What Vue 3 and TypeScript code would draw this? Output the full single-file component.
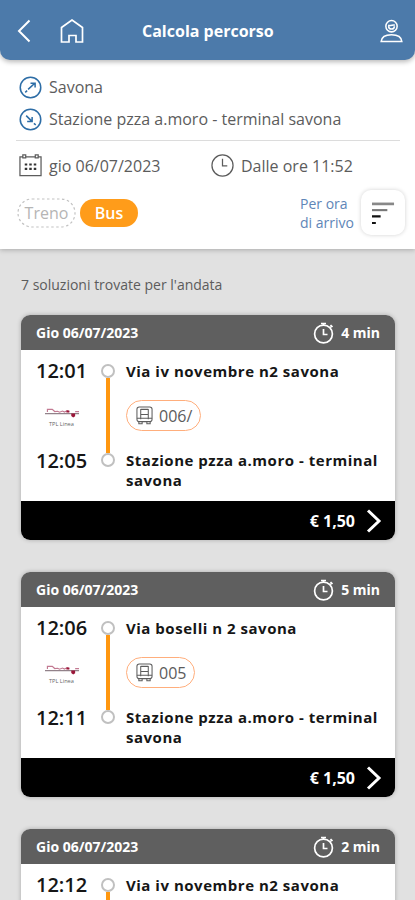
<script setup lang="ts">
interface Trip {
  duration: string
  departure: string
  arrival: string
  from: string
  line: string
}

const trips: Trip[] = [
  { duration: '4 min', departure: '12:01', arrival: '12:05', from: 'Via iv novembre n2 savona', line: '006/' },
  { duration: '5 min', departure: '12:06', arrival: '12:11', from: 'Via boselli n 2 savona', line: '005' },
  { duration: '2 min', departure: '12:12', arrival: '', from: 'Via iv novembre n2 savona', line: '' },
]
</script>

<template>
  <div class="screen">
    <header class="topbar">
      <svg class="back" viewBox="0 0 14 24"><path d="M12.500 1.500 2 12l10.500 10.500" /></svg>
      <svg class="home" viewBox="0 0 24 24"><path d="M1.500 8.500 12 1l10.500 7.500V23H16v-6.500H9V23H1.500z" /></svg>
      <h1>Calcola percorso</h1>
      <svg class="user" viewBox="0 0 24 24">
        <circle cx="12" cy="7" r="5.900" /><path d="M9 7c0 4 6 4 6 0M8.500 6c3 1 5-1 7 0M1.200 23c.5-5 4.500-7 10.800-7s10.300 2 10.800 7z" />
      </svg>
    </header>

    <section class="search">
      <div class="place">
        <svg viewBox="0 0 24 24"><circle cx="12" cy="12" r="10.700" /><path d="m6.500 17 2-1.700M9.500 14l7-6.500M12 7.500h4.800v4.500" /></svg>
        <span>Savona</span>
      </div>
      <div class="place">
        <svg viewBox="0 0 24 24"><circle cx="12" cy="12" r="10.700" /><path d="m7.500 8 6 6M13.700 9.500V14H8.500M15.500 16l2 1.500" /></svg>
        <span>Stazione pzza a.moro - terminal savona</span>
      </div>
      <div class="when">
        <div class="date">
          <svg viewBox="0 0 24 24">
            <path d="M4 3H1v19.500h22V3h-3M7 3h10M4 1h3v3H4zM17 1h3v3h-3z" />
            <path class="dots" d="M6 11h12M6 15.500h12" />
          </svg>
          <span>gio 06/07/2023</span>
        </div>
        <div class="hour">
          <svg viewBox="0 0 24 24"><circle cx="12" cy="12" r="11" /><path d="M12 5v7.500h5" /></svg>
          <span>Dalle ore 11:52</span>
        </div>
      </div>
      <div class="filters">
        <button class="chip train">
          <svg viewBox="0 0 59 30"><rect x="1" y="1" width="57" height="28" rx="14" /></svg>
          <span>Treno</span>
        </button>
        <button class="chip bus">Bus</button>
        <div class="sort-label">Per ora<br />di arrivo</div>
        <button class="sort">
          <svg viewBox="0 0 24 24">
            <path class="light" d="M0 2.500h23" /><path class="mid" d="M0 9h16" /><path d="M0 15.500h9M0 22.500h4" />
          </svg>
        </button>
      </div>
    </section>

    <main class="results">
      <p class="count">7 soluzioni trovate per l'andata</p>
      <article v-for="trip in trips" :key="trip.departure" class="card">
        <div class="card-head">
          <span class="day">Gio 06/07/2023</span>
          <svg viewBox="0 0 22 22">
            <circle cx="10.500" cy="12" r="8.900" /><path d="M8 1.500h5M10.500 1v2M10.500 7v5.500h4M17.500 3l2 2M18.500 4l-1.500 1.500" />
          </svg>
          <span class="duration">{{ trip.duration }}</span>
        </div>
        <div class="card-body">
          <div class="times">
            <span class="time">{{ trip.departure }}</span>
            <div v-if="trip.arrival" class="operator">
              <svg viewBox="0 0 36 10">
                <path class="grey" d="M0 5h35v1.300H0z" />
                <path class="red" d="M2.500 4V1.300h5L10 3.500l3-.3 2 1 3-1.200 2 1 3-1.500 2 1.500M31 3.500h4" />
                <path class="dark" d="M22 2.500h3v2h-3zM27 5.500h4v2.800l-2 1.200-2-1.500z" />
              </svg>
              <small>TPL Linea</small>
            </div>
            <span v-if="trip.arrival" class="time">{{ trip.arrival }}</span>
          </div>
          <div class="track"><i class="stop"></i><i class="rail"></i><i class="stop"></i></div>
          <div class="stops">
            <span class="stop-name">{{ trip.from }}</span>
            <template v-if="trip.arrival">
              <div class="line">
                <svg viewBox="0 0 18 20">
                  <rect x="1" y="1" width="16" height="15.500" rx="2.500" />
                  <path d="M5 3v11M13 3v11M5 3.500h8M5 9h8M1 13h16M3 16.500v2.300h3.500v-2.300M11.500 16.500v2.300H15v-2.300" />
                </svg>
                <span>{{ trip.line }}</span>
              </div>
              <span class="stop-name">Stazione pzza a.moro - terminal savona</span>
            </template>
          </div>
        </div>
        <div v-if="trip.arrival" class="card-foot">
          <span>€ 1,50</span>
          <svg viewBox="0 0 16 24"><path d="m2 1.500 11 10.500L2 22.500" /></svg>
        </div>
      </article>
    </main>
  </div>
</template>

<style>
body {
  background: #e1e1e1;
}
</style>

<style scoped>
.screen {
  height: 900px;
  overflow: hidden;
  display: flex;
  flex-direction: column;
  background: #e1e1e1;
  font-family: "Open Sans", sans-serif;
  color: #5c5c5c;
}
svg {
  display: block;
  flex: none;
  fill: none;
  stroke: currentColor;
}
button {
  border: 0;
  padding: 0;
  font: inherit;
}
.topbar {
  position: relative;
  z-index: 2;
  flex: none;
  box-sizing: border-box;
  height: 60px;
  padding: 2px 12px 0 17px;
  display: flex;
  align-items: center;
  background: #4c7aaa;
  border-radius: 0 0 10px 10px;
  box-shadow: 0 2px 5px rgba(0, 0, 0, 0.28);
  color: #fff;
}
.back {
  width: 14px;
  height: 24px;
  stroke-width: 2;
}
.home {
  width: 24px;
  height: 24px;
  margin-left: 29px;
  stroke-width: 1.7;
}
h1 {
  margin: 0 auto 0 58px;
  font-size: 16px;
  line-height: 22px;
  font-weight: 700;
  white-space: nowrap;
}
.user {
  width: 23px;
  height: 24px;
  stroke-width: 1.6;
}
.search {
  position: relative;
  z-index: 1;
  flex: none;
  box-sizing: border-box;
  height: 199px;
  margin-top: -10px;
  padding: 21px 10px 0 16px;
  background: #fff;
  box-shadow: 0 1px 5px rgba(0, 0, 0, 0.25);
  font-size: 16px;
}
.place {
  display: flex;
  align-items: center;
  gap: 7px;
  height: 32px;
  padding-left: 3px;
  white-space: nowrap;
}
.place svg {
  width: 23px;
  height: 23px;
  color: #2d6da6;
  stroke-width: 1.6;
}
.when {
  box-sizing: border-box;
  width: 384px;
  height: 50px;
  margin-top: 5px;
  padding-left: 3px;
  border-top: 1px solid #dcdcdc;
  display: flex;
  align-items: center;
  white-space: nowrap;
}
.date,
.hour {
  display: flex;
  align-items: center;
  gap: 7px;
}
.date {
  width: 192px;
}
.when svg {
  width: 23px;
  height: 23px;
  stroke-width: 1.3;
}
.when .dots {
  stroke: #333;
  stroke-width: 2.2;
  stroke-dasharray: 2.6 2.1;
}
.filters {
  display: flex;
  align-items: center;
  height: 45px;
}
.chip {
  width: 59px;
  height: 30px;
  border-radius: 15px;
  background: none;
  color: #b5b5b5;
}
.train {
  margin-left: 1px;
  display: grid;
  place-items: center;
}
.train > * {
  grid-area: 1 / 1;
}
.train svg {
  width: 59px;
  height: 30px;
  stroke: #c2c2c2;
  stroke-dasharray: 2.5 2.5;
  stroke-width: 1.2;
}
.bus {
  width: 58px;
  height: 28px;
  margin-left: 4px;
  background: #ff9c1a;
  color: #fff;
  font-weight: 600;
}
.sort-label {
  margin-left: auto;
  width: 61px;
  font-size: 14px;
  line-height: 19px;
  color: #6086b7;
  white-space: nowrap;
}
.sort {
  width: 44px;
  height: 45px;
  border-radius: 10px;
  background: #fff;
  box-shadow: 0 0 4px rgba(0, 0, 0, 0.18);
}
.sort svg {
  width: 23px;
  height: 24px;
  margin: 0 auto;
  color: #111;
  stroke-width: 2.2;
}
.sort .light {
  stroke: #888;
  stroke-width: 2.8;
}
.sort .mid {
  stroke: #777;
}
.results {
  padding: 0 20px 0 21px;
}
.count {
  margin: 26px 0 20px;
  font-size: 14px;
  line-height: 20px;
}
.card {
  height: 225px;
  margin-bottom: 32px;
  border-radius: 9px;
  overflow: hidden;
  background: #fff;
  box-shadow: 0 0 4px rgba(0, 0, 0, 0.25);
}
.card-head {
  box-sizing: border-box;
  height: 35px;
  padding: 0 15px;
  display: flex;
  align-items: center;
  background: #5f5f5f;
  color: #fff;
  font-size: 14px;
  font-weight: 700;
}
.card-head svg {
  width: 22px;
  height: 22px;
  margin: 0 6px 0 auto;
  stroke-width: 1.7;
}
.card-body {
  height: 151px;
  display: flex;
  color: #161616;
}
.times {
  width: 66px;
  padding: 8px 0 0 15px;
}
.time {
  display: block;
  font-size: 20px;
  line-height: 26px;
  font-weight: 600;
}
.operator {
  height: 64px;
  padding: 24px 0 0 9px;
  box-sizing: border-box;
}
.operator svg {
  width: 35px;
  height: 10px;
  stroke: none;
}
.operator .grey {
  fill: #92828a;
}
.operator .red {
  fill: none;
  stroke: #c27a92;
  stroke-width: 1.2;
}
.operator .dark {
  fill: #9b1639;
}
.operator small {
  display: block;
  margin: 2px 0 0 4px;
  font-size: 5.6px;
  line-height: 8px;
  color: #666;
}
.track {
  width: 13px;
  height: 103px;
  padding-top: 14px;
  box-sizing: content-box;
  display: flex;
  flex-direction: column;
  align-items: center;
  margin-left: -1px;
}
.stop {
  flex: none;
  box-sizing: border-box;
  width: 14px;
  height: 14px;
  border: 2px solid #c0c0c0;
  border-radius: 50%;
}
.rail {
  width: 4px;
  flex: 1;
  background: #ff9710;
}
.stops {
  width: 262px;
  padding: 11px 0 0 12px;
}
.stop-name {
  display: block;
  font-size: 15px;
  line-height: 20px;
  font-weight: 700;
  letter-spacing: 0.52px;
}
.line {
  box-sizing: border-box;
  width: max-content;
  height: 31px;
  margin: 19px 0;
  padding: 0 8px 0 9px;
  display: flex;
  align-items: center;
  gap: 6px;
  border: 1px solid #ffae7c;
  border-radius: 16px;
  color: #5c5c5c;
  font-size: 16px;
}
.line svg {
  width: 17px;
  height: 19px;
  stroke-width: 1.1;
}
.card-foot {
  height: 39px;
  padding-right: 13px;
  display: flex;
  align-items: center;
  justify-content: flex-end;
  gap: 11px;
  background: #000;
  color: #fff;
  font-size: 16px;
  font-weight: 700;
}
.card-foot svg {
  width: 16px;
  height: 24px;
  stroke-width: 3;
}
</style>
